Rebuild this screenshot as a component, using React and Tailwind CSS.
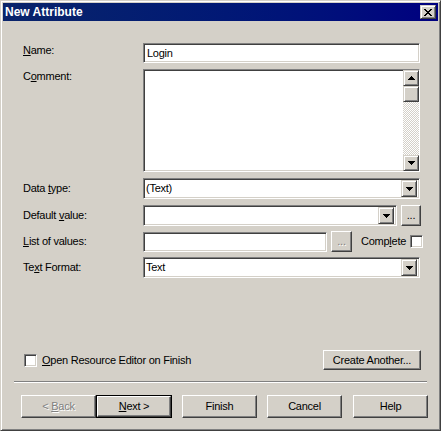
import React from 'react';

const sunken =
  'border border-t-[#808080] border-l-[#808080] border-b-white border-r-white shadow-[inset_1px_1px_0_#404040,inset_-1px_-1px_0_#d4d0c8] bg-white';
const raised =
  'border border-t-white border-l-white border-b-[#404040] border-r-[#404040] shadow-[inset_-1px_-1px_0_#808080] bg-[#d4d0c8]';
const arrowBtn =
  'border border-t-[#d4d0c8] border-l-[#d4d0c8] border-b-[#404040] border-r-[#404040] shadow-[inset_1px_1px_0_#fff,inset_-1px_-1px_0_#808080] bg-[#d4d0c8] flex items-center justify-center';

function Tri({ up }) {
  const rows = [7, 5, 3, 1];
  return (
    <svg width="7" height="4" viewBox="0 0 7 4" shapeRendering="crispEdges" className={up ? 'rotate-180' : ''}>
      {rows.map((w, i) => (
        <rect key={i} x={(7 - w) / 2} y={i} width={w} height="1" fill="#000" />
      ))}
    </svg>
  );
}

function CloseX() {
  const px = [
    [0, 1, 6, 7],
    [1, 2, 5, 6],
    [2, 3, 4, 5],
    [3, 4],
    [2, 3, 4, 5],
    [1, 2, 5, 6],
    [0, 1, 6, 7],
  ];
  return (
    <svg width="8" height="7" viewBox="0 0 8 7" shapeRendering="crispEdges">
      {px.map((row, y) => row.map(x => <rect key={`${x}-${y}`} x={x} y={y} width="1" height="1" fill="#000" />))}
    </svg>
  );
}

function U({ children }) {
  return <span className="underline underline-offset-[1px]">{children}</span>;
}

function Label({ children, className = '' }) {
  return <div className={`w-[120px] shrink-0 leading-[13px] ${className}`}>{children}</div>;
}

function Combo({ value, width }) {
  return (
    <div className={`${sunken} h-[21px] flex items-center pl-[2px] pr-[2px]`} style={{ width }}>
      <span className="flex-1 leading-[13px]">{value}</span>
      <div className={`${arrowBtn} w-[16px] h-[17px]`}>
        <Tri />
      </div>
    </div>
  );
}

function Btn({ children, isDefault, disabled, className = '' }) {
  const inner = (
    <div className={`${raised} h-full w-full flex items-center justify-center leading-[13px]`}>
      <span className={disabled ? 'text-[#808080] [text-shadow:1px_1px_0_#fff]' : ''}>{children}</span>
    </div>
  );
  if (isDefault) {
    return <div className={`border border-black ${className}`}>{inner}</div>;
  }
  return <div className={className}>{inner}</div>;
}

export default function App() {
  return (
    <div className="w-[441px] h-[431px] bg-[#d4d0c8] border border-t-[#d4d0c8] border-l-[#d4d0c8] border-b-[#404040] border-r-[#404040] shadow-[inset_1px_1px_0_#fff,inset_-1px_-1px_0_#808080] p-[2px] font-['Liberation_Sans',Arial,sans-serif] text-[11px] text-black flex flex-col">
      {/* title bar */}
      <div className="h-[18px] flex items-center pl-[2px] pr-[2px] bg-gradient-to-r from-[#0a246a] to-[#000080]">
        <span className="flex-1 text-white font-bold text-[12px] leading-[14px]">New Attribute</span>
        <div className={`${arrowBtn} w-[16px] h-[14px]`}>
          <CloseX />
        </div>
      </div>

      <div className="pl-[20px] flex flex-col tracking-[-0.25px]">
        {/* Name */}
        <div className="flex mt-[22px]">
          <Label className="pt-[1px]"><U>N</U>ame:</Label>
          <div className={`${sunken} w-[277px] h-[20px] flex items-center pl-[3px] leading-[13px]`}>Login</div>
        </div>

        {/* Comment */}
        <div className="flex mt-[6px]">
          <Label className="pt-[1px]">C<U>o</U>mment:</Label>
          <div className={`${sunken} w-[277px] h-[103px] flex justify-end`}>
            <div className="w-[16px] flex flex-col">
              <div className={`${arrowBtn} h-[16px]`}><Tri up /></div>
              <div className={`${arrowBtn} h-[16px]`} />
              <div className="flex-1 bg-[repeating-conic-gradient(#fff_0_25%,#d4d0c8_0_50%)] bg-[length:2px_2px]" />
              <div className={`${arrowBtn} h-[16px]`}><Tri /></div>
            </div>
          </div>
        </div>

        {/* Data type */}
        <div className="flex items-center mt-[6px]">
          <Label>Data <U>t</U>ype:</Label>
          <Combo value="(Text)" width={277} />
        </div>

        {/* Default value */}
        <div className="flex items-center mt-[6px]">
          <Label>Default <U>v</U>alue:</Label>
          <Combo value="" width={254} />
          <div className={`${raised} w-[20px] h-[21px] ml-[4px] flex items-center justify-center leading-[13px]`}>...</div>
        </div>

        {/* List of values */}
        <div className="flex items-center mt-[5px]">
          <Label><U>L</U>ist of values:</Label>
          <div className={`${sunken} w-[184px] h-[20px]`} />
          <div className={`${raised} w-[21px] h-[21px] ml-[4px] flex items-center justify-center leading-[13px] text-[#808080] [text-shadow:1px_1px_0_#fff]`}>...</div>
          <span className="ml-[9px] leading-[13px]">Comp<U>l</U>ete</span>
          <div className={`${sunken} w-[13px] h-[13px] ml-[4px]`} />
        </div>

        {/* Text Format */}
        <div className="flex items-center mt-[5px]">
          <Label>Te<U>x</U>t Format:</Label>
          <Combo value="Text" width={277} />
        </div>

        {/* options row */}
        <div className="flex items-center mt-[72px] h-[20px]">
          <div className={`${sunken} w-[13px] h-[13px] ml-[1px]`} />
          <span className="ml-[5px] flex-1 leading-[13px]"><U>O</U>pen Resource Editor on Finish</span>
          <Btn className="w-[98px] h-[20px] mr-[17px]">Create Another...</Btn>
        </div>
      </div>

      {/* separator */}
      <div className="mt-[11px] ml-[11px] mr-[11px] border-t border-t-[#808080] border-b border-b-white" />

      {/* buttons */}
      <div className="flex mt-[12px] pl-[18px] h-[23px] tracking-[-0.25px]">
        <Btn disabled className="w-[75px]">&lt; <U>B</U>ack</Btn>
        <Btn isDefault className="w-[76px]"><U>N</U>ext &gt;</Btn>
        <Btn className="w-[75px] ml-[10px]">Finish</Btn>
        <Btn className="w-[75px] ml-[10px]">Cancel</Btn>
        <Btn className="w-[75px] ml-[11px]">Help</Btn>
      </div>
    </div>
  );
}
